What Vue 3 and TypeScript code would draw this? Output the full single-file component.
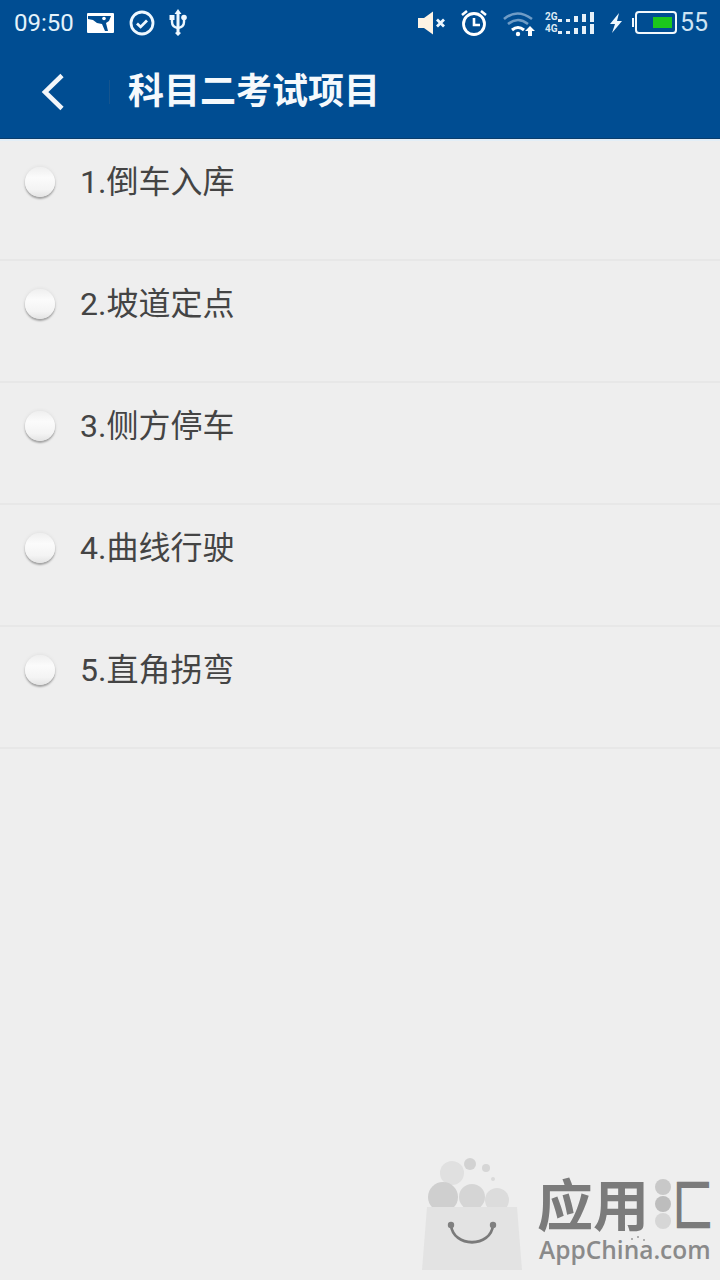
<template>
  <div class="page">
    <header class="header">
      <div class="status">
        <span class="time">09:50</span>
        <svg class="ic-photo" viewBox="0 0 27 20" width="27" height="20">
          <rect x="0" y="0" width="27" height="20" rx="1" fill="#fff" />
          <path d="M1 3h23l-2 5-3 2 2 8h-3l-3-7-5-1-4-3-5-1z" fill="#004d92" />
          <circle cx="17" cy="5.500" r="1.800" fill="#fff" />
        </svg>
        <svg class="ic-check" viewBox="0 0 26 26" width="26" height="26">
          <circle cx="13" cy="13" r="11" fill="none" stroke="#eef8ff" stroke-width="2.800" />
          <path d="M8 13.500l3.600 3.400 6.400-6.400" fill="none" stroke="#eef8ff" stroke-width="2.800" />
        </svg>
        <svg class="ic-usb" viewBox="0 0 18 28" width="18" height="28">
          <path d="M9 0l3.500 5H10.500v18l1.500 1-3 3-3-3 1.500-1V5H5.500z" fill="#eef8ff" />
          <path d="M3 9v4q0 5 6 6q6-1 6-6V9" fill="none" stroke="#eef8ff" stroke-width="2.400" />
          <rect x="0.500" y="6" width="5" height="5" fill="#eef8ff" />
          <circle cx="15" cy="8.500" r="2.800" fill="#eef8ff" />
        </svg>
        <span class="spacer"></span>
        <svg class="ic-mute" viewBox="0 0 30 24" width="30" height="24">
          <path d="M0 7h6l9-6.500v23L6 17H0z" fill="#fdf3e4" />
          <path d="M19 8.500l7 7M26 8.500l-7 7" stroke="#eef8ff" stroke-width="2.800" />
        </svg>
        <svg class="ic-alarm" viewBox="0 0 30 30" width="30" height="30">
          <circle cx="15" cy="16" r="10.500" fill="none" stroke="#fff" stroke-width="2.800" />
          <path d="M15 10v7h6" fill="none" stroke="#fff" stroke-width="2.600" />
          <path d="M3 7l5-4M27 7l-5-4" stroke="#fff" stroke-width="2.600" />
        </svg>
        <svg class="ic-wifi" viewBox="0 0 32 28" width="32" height="28">
          <path d="M1 10q13-11 28 0" fill="none" stroke="#6f9cc6" stroke-width="2.600" />
          <path d="M5 15q10-8 20 0" fill="none" stroke="#6f9cc6" stroke-width="2.600" />
          <path d="M9 21q6-5 12 0" fill="none" stroke="#fff" stroke-width="3" />
          <circle cx="15" cy="25" r="2.200" fill="#fff" />
          <path d="M27 17l5 5h-3v5h-4v-5H22z" fill="#fff" />
        </svg>
        <div class="signal">
          <div v-for="net in ['2G', '4G']" :key="net" class="signal-row">
            <span class="net">{{ net }}</span>
            <i v-for="(h, n) in bars" :key="n" :style="{ height: h + 'px' }"></i>
          </div>
        </div>
        <svg class="ic-bolt" viewBox="0 0 14 20" width="14" height="20">
          <path d="M10 0L1 11h5l-3 9 10-12H8z" fill="#eef8ff" />
        </svg>
        <div class="battery">
          <span class="battery-fill"></span>
        </div>
        <span class="level">55</span>
      </div>
      <div class="toolbar">
        <svg class="back" viewBox="0 0 24 38" width="24" height="38">
          <path d="M21 2.500L4 19l17 16.500" fill="none" stroke="#f2f6fa" stroke-width="4.600" />
        </svg>
        <span class="sep"></span>
        <h1 class="title">科目二考试项目</h1>
      </div>
    </header>
    <ul class="list">
      <li v-for="(item, i) in items" :key="item" class="row">
        <span class="radio"></span>
        <span class="label">{{ i + 1 }}.{{ item }}</span>
      </li>
    </ul>
    <div class="mark">
      <svg class="mark-bag" viewBox="0 0 100 116" width="100" height="116">
        <circle cx="30" cy="17" r="12" fill="#e0e0e0" />
        <circle cx="48" cy="8" r="6" fill="#d2d2d2" />
        <circle cx="64" cy="12" r="4" fill="#d6d6d6" />
        <circle cx="71" cy="23" r="2" fill="#dadada" />
        <circle cx="21" cy="41" r="15" fill="#cfcfcf" />
        <circle cx="50" cy="41" r="13" fill="#d5d5d5" />
        <circle cx="75" cy="44" r="12" fill="#dcdcdc" />
        <path d="M5 51h90l5 63H0z" fill="#e3e3e3" />
        <path d="M29 69C31 92 69 92 71 69" fill="none" stroke="#7a7a7a" stroke-width="2.800" />
        <circle cx="29" cy="69" r="3.200" fill="#808080" />
        <circle cx="71" cy="69" r="3.200" fill="#808080" />
      </svg>
      <div class="mark-text">
        <div class="mark-name">
          <span>应用</span>
          <span class="mark-dots"><i></i><i></i><i></i></span>
          <span class="mark-box">匚</span>
        </div>
        <div class="mark-url">
          AppChina.com
          <i class="spark s1"></i><i class="spark s2"></i><i class="spark s3"></i>
        </div>
      </div>
    </div>
  </div>
</template>

<script setup lang="ts">
const items: string[] = ['倒车入库', '坡道定点', '侧方停车', '曲线行驶', '直角拐弯']
const bars: number[] = [3, 3, 6, 8, 10]
</script>

<style>
html,
body {
  margin: 0;
  background: #eeeeee;
}
</style>

<style scoped>
.page {
  position: relative;
  width: 720px;
  height: 1280px;
  overflow: hidden;
  background: #eeeeee;
  font-family: Roboto, "Noto Sans CJK SC", sans-serif;
}

.header {
  position: relative;
  height: 139px;
  box-sizing: border-box;
  background: #004d92;
  border-bottom: 1px solid #0b3d6b;
  box-shadow: 0 2px 0 #e2eef7;
}

.status {
  display: flex;
  align-items: center;
  height: 45px;
  padding: 0 13px 0 14px;
  color: #e4f3fb;
}

.status > svg {
  flex: none;
}

.time {
  font-size: 24px;
  width: 59px;
}

.ic-photo {
  margin-left: 14px;
}

.ic-check {
  margin-left: 15px;
}

.ic-usb {
  margin-left: 14px;
}

.spacer {
  flex: 1;
}

.ic-mute {
  margin-right: 11px;
}

.ic-alarm {
  margin-right: 14px;
}

.ic-wifi {
  margin-right: 10px;
}

.signal {
  display: flex;
  flex: none;
  flex-direction: column;
  gap: 1px;
  width: 48px;
  margin-right: 16px;
}

.signal-row {
  display: flex;
  align-items: flex-end;
  height: 11px;
}

.signal-row i {
  flex: none;
  width: 4px;
  margin-right: 4px;
  background: #e6f0f8;
}

.signal-row i:last-child {
  margin-right: 0;
}

.net {
  flex: none;
  width: 12px;
  margin-right: 1px;
  font-size: 10px;
  line-height: 11px;
  font-weight: 700;
  color: #dbe9f4;
}

.ic-bolt {
  margin-right: 12px;
}

.battery {
  position: relative;
  display: flex;
  flex: none;
  justify-content: flex-end;
  box-sizing: border-box;
  width: 42px;
  height: 23px;
  padding: 4px 3px;
  border: 2px solid #f2f8fc;
  border-radius: 4px;
  margin-right: 3px;
}

.battery::before {
  content: "";
  position: absolute;
  left: -5px;
  top: 5px;
  width: 2px;
  height: 9px;
  background: #f2f8fc;
}

.battery-fill {
  width: 19px;
  background: #1cc71c;
}

.level {
  flex: none;
  width: 27px;
  font-size: 25px;
  color: #cfe4f3;
}

.toolbar {
  display: flex;
  align-items: center;
  height: 93px;
  padding-left: 41px;
}

.sep {
  width: 1px;
  height: 24px;
  margin-left: 44px;
  background: #15558f;
}

.title {
  margin: 0 0 0 18px;
  font-size: 36px;
  line-height: 1;
  font-weight: 700;
  color: #f5f9fc;
}

.list {
  margin: 0;
  padding: 0;
  list-style: none;
}

.row {
  display: flex;
  align-items: flex-start;
  box-sizing: border-box;
  height: 122px;
  padding: 24px 0 0 25px;
  border-bottom: 2px solid #e7e7e7;
}

.radio {
  width: 30px;
  height: 30px;
  margin-top: 4px;
  border-radius: 50%;
  background: linear-gradient(#efefef, #fbfbfb 35%, #f4f4f4 75%, #e4e4e4);
  box-shadow: 0 2px 2px rgba(0, 0, 0, 0.3), 0 0 4px rgba(0, 0, 0, 0.08);
}

.label {
  margin-left: 25px;
  font-size: 32px;
  line-height: 38px;
  color: #444444;
}

.mark {
  position: absolute;
  left: 422px;
  top: 1156px;
  display: flex;
  width: 298px;
}

.mark-bag {
  flex: none;
}

.mark-text {
  flex: none;
  width: 183px;
  margin: 18px 0 0 15px;
  white-space: nowrap;
}

.mark-name {
  display: flex;
  align-items: center;
  height: 56px;
  font-size: 56px;
  line-height: 56px;
  font-weight: 700;
  color: #7b7b7b;
  font-family: "Noto Sans CJK SC", sans-serif;
}

.mark-dots {
  display: flex;
  flex: none;
  flex-direction: column;
  gap: 1px;
  margin: 4px 0 0 6px;
}

.mark-dots i {
  width: 16px;
  height: 16px;
  border-radius: 50%;
  background: #c8c8c8;
}

.mark-dots i:nth-child(2) {
  background: #bdbdbd;
}

.mark-dots i:nth-child(3) {
  background: #d6d6d6;
}

.mark-box {
  flex: none;
  margin-left: -6px;
  transform: scaleX(0.72);
}

.mark-url {
  position: relative;
  margin: 7px 0 0 2px;
  font-size: 24.500px;
  line-height: 26px;
  font-weight: 600;
  color: #8a8a8a;
  font-family: "Open Sans", sans-serif;
}

.spark {
  position: absolute;
  width: 2px;
  height: 2px;
  border-radius: 50%;
  background: #9a9a9a;
}

.s1 {
  left: 92px;
  top: 1px;
}

.s2 {
  left: 98px;
  top: -1px;
}

.s3 {
  left: 104px;
  top: 2px;
}
</style>
